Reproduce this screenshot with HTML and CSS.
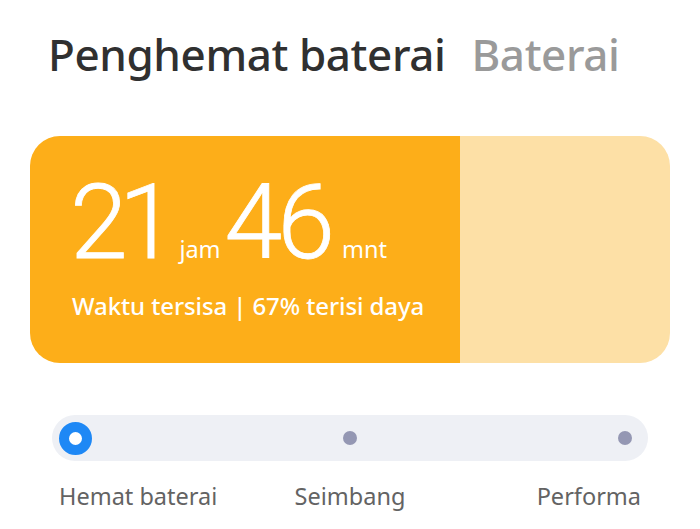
FILE: index.html
```html
<!DOCTYPE html>
<html lang="id">
<head>
<meta charset="utf-8">
<link rel="stylesheet" href="styles.css">
</head>
<body>
<header class="tabs">
  <span class="tab tab-active">Penghemat baterai</span>
  <span class="tab tab-inactive">Baterai</span>
</header>
<section class="card">
  <div class="card-fill">
    <div class="time">
      <span class="num num-first">21</span><span class="unit">jam</span><span class="num">46</span><span class="unit">mnt</span>
    </div>
    <div class="sub">Waktu tersisa | 67% terisi daya</div>
  </div>
  <div class="card-rest"></div>
</section>
<section class="mode">
  <div class="track">
    <span class="stop"><span class="knob"></span></span>
    <span class="stop"><span class="dot"></span></span>
    <span class="stop"><span class="dot"></span></span>
  </div>
  <div class="labels">
    <span class="label label-left">Hemat baterai</span>
    <span class="label label-mid">Seimbang</span>
    <span class="label label-right">Performa</span>
  </div>
</section>
</body>
</html>
```
FILE: styles.css
```css
html, body {
  margin: 0;
  padding: 0;
  background: #ffffff;
  width: 700px;
  height: 529px;
  overflow: hidden;
  font-family: "Noto Sans", Roboto, sans-serif;
}

.tabs {
  display: flex;
  align-items: baseline;
  gap: 26px;
  padding: 24px 0 0 48px;
  height: 113px;
  box-sizing: border-box;
}

.tab {
  font-size: 44px;
  font-weight: 500;
  line-height: 60px;
  letter-spacing: -0.4px;
}

.tab-active { color: #303030; }
.tab-inactive { color: #9a9a9a; }

.card {
  display: flex;
  margin: 23px 30px 0 30px;
  height: 227px;
  border-radius: 30px;
  overflow: hidden;
}

.card-fill {
  width: 430px;
  background: #fdae19;
  color: #ffffff;
  box-sizing: border-box;
  padding: 37px 0 0 42px;
}

.card-rest {
  flex: 1;
  background: #fde0a6;
}

.time {
  display: flex;
  align-items: baseline;
  height: 100px;
}

.num {
  font-family: Roboto, "Noto Sans", sans-serif;
  font-weight: 300;
  font-size: 104px;
  line-height: 100px;
  letter-spacing: -5px;
  -webkit-text-stroke: 0.8px #ffffff;
}

.num-first {
  letter-spacing: -9px;
  margin-left: -2px;
}

.unit {
  font-size: 23.5px;
  margin: 0 4px 0 12px;
}

.sub {
  margin-top: 18px;
  font-size: 24px;
  font-weight: 500;
  line-height: 30px;
  letter-spacing: -0.1px;
}

.mode {
  margin: 52px 52px 0 52px;
}

.track {
  height: 46px;
  border-radius: 23px;
  background: #eef0f5;
  display: flex;
  align-items: center;
  justify-content: space-between;
  padding: 0 6px;
}

.stop {
  width: 34px;
  height: 34px;
  display: flex;
  align-items: center;
  justify-content: center;
}

.knob {
  width: 13px;
  height: 13px;
  border-radius: 50%;
  border: 10px solid #1e88f5;
  background: #ffffff;
}

.dot {
  width: 14px;
  height: 14px;
  border-radius: 50%;
  background: #9497b3;
}

.labels {
  display: grid;
  grid-template-columns: 1fr auto 1fr;
  margin-top: 20px;
  padding: 0 7px;
}

.label {
  font-size: 23.5px;
  color: #636363;
  line-height: 30px;
}

.label-left { justify-self: start; }
.label-mid { justify-self: center; }
.label-right { justify-self: end; }
```
